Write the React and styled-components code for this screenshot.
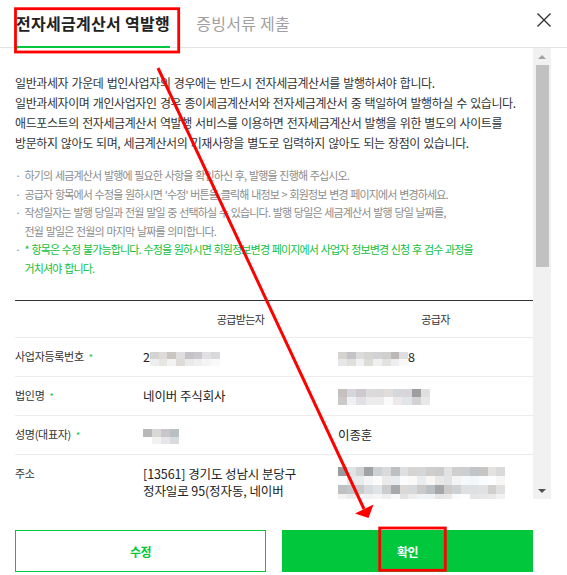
import styled, { createGlobalStyle } from "styled-components";

const GlobalStyle = createGlobalStyle`
    * { box-sizing: border-box; }
    body {
        margin: 0;
        background: #fff;
        font-family: "Noto Sans CJK KR", "Noto Sans", sans-serif;
    }
`

const GREEN = "#00c73c";

// pixelated blocks that hide private data in the screenshot
const seeded = (seed) => {
    let s = seed;
    return () => {
        s = (s * 9301 + 49297) % 233280;
        return s / 233280;
    };
};

const makeMosaic = (cols, rows, seed) => {
    const rnd = seeded(seed);
    const out = [];
    for (let r = 0; r < rows; r++) {
        const row = [];
        for (let c = 0; c < cols; c++) {
            const dark = r % 2 === 0;
            let v = dark ? 190 + Math.floor(rnd() * 40) : 226 + Math.floor(rnd() * 28);
            if (dark && rnd() > 0.9) v = 155 + Math.floor(rnd() * 20);
            const tint = Math.floor(rnd() * 6) - 3;
            row.push(`rgb(${v + tint},${v},${v - tint})`);
        }
        out.push(row);
    }
    return out;
};

const regNoBuyer = [
    ["#d6d4d1", "#dedcda", "#c9c6c2", "#e1dee1", "#c5c3c7", "#c9c8cc", "#e3e0e3", "#d9d9dd"],
    ["#eeeeee", "#e5e5e2", "#f3f3f3", "#dfdbd8", "#eaeaea", "#efefef", "#f4f4f4", "#f9f9f9"],
];
const regNoSupplier = [
    ["#d4d3cf", "#c4c3c7", "#dcdbdd", "#d5d5d2", "#d2d1d6", "#cfcfcd", "#bcb8b7", "#dedde1"],
    ["#e6e6e6", "#dfdfdb", "#f1f1f1", "#dcdcd8", "#f0f0f0", "#e2e2e0", "#efedf0", "#f8f8f8"],
];
const companySupplier = [
    ["#c4c1be", "#d6d4dc", "#cdc9cc", "#dcdadb", "#dad8da", "#e2dddd", "#d5d8db", "#d8d4da", "#9e9e9e", "#e0e0e0"],
    ["#cbc9c7", "#eef0f3", "#e2e0e2", "#ebebeb", "#ebebeb", "#fafafa", "#ede9ea", "#e2e5e7", "#d4d2d4", "#e8e8e6"],
];
const ceoBuyer = [
    ["#b8b8b8", "#d8d8d4", "#c8c6ca", "#b9c0c3"],
    ["#ffffff", "#f1f1f1", "#e6e6e8", "#d8dcdc"],
];
const addressSupplier = makeMosaic(19, 4, 17);

const Mosaic = ({ cells, w = 8.75, h = 7 }) => (
    <Blocks $cols={cells[0].length} $w={w} $h={h}>
        {cells.flat().map((c, i) => <Block key={i} $c={c} />)}
    </Blocks>
);

const notes = [
    { text: <>하기의 세금계산서 발행에 필요한 사항을 확인하신 후, 발행을 진행해 주십시오.</> },
    { text: <>공급자 항목에서 수정을 원하시면 '수정' 버튼을 클릭해 내정보 &gt; 회원정보 변경 페이지에서 변경하세요.</> },
    { text: <>작성일자는 발행 당일과 전월 말일 중 선택하실 수 있습니다. 발행 당일은 세금계산서 발행 당일 날짜를,<br />전월 말일은 전월의 마지막 날짜를 의미합니다.</> },
    { text: <>* 항목은 수정 불가능합니다. 수정을 원하시면 회원정보변경 페이지에서 사업자 정보변경 신청 후 검수 과정을<br />거치셔야 합니다.</>, accent: true },
];

const App = () => {

    return (
        <>
            <GlobalStyle />
            <Modal>
                <Header>
                    <Tab $active>전자세금계산서 역발행</Tab>
                    <Tab>증빙서류 제출</Tab>
                    <CloseButton aria-label="닫기">
                        <svg width="14" height="14" viewBox="0 0 14 14">
                            <path d="M0.5 0.5 L13.5 13.5 M13.5 0.5 L0.5 13.5" stroke="#333" strokeWidth="1.4" fill="none" />
                        </svg>
                    </CloseButton>
                </Header>

                <Body>
                    <Content>
                        <Intro>
                            일반과세자 가운데 법인사업자의 경우에는 반드시 전자세금계산서를 발행하셔야 합니다.<br />
                            일반과세자이며 개인사업자인 경우 종이세금계산서와 전자세금계산서 중 택일하여 발행하실 수 있습니다.<br />
                            애드포스트의 전자세금계산서 역발행 서비스를 이용하면 전자세금계산서 발행을 위한 별도의 사이트를<br />
                            방문하지 않아도 되며, 세금계산서의 기재사항을 별도로 입력하지 않아도 되는 장점이 있습니다.
                        </Intro>

                        <Notes>
                            {notes.map((n, i) => (
                                <Note key={i} $accent={n.accent}>{n.text}</Note>
                            ))}
                        </Notes>

                        <InfoTable>
                            <colgroup>
                                <col style={{ width: 128 }} />
                                <col style={{ width: 195 }} />
                                <col />
                            </colgroup>
                            <thead>
                                <tr>
                                    <HeadCell />
                                    <HeadCell>공급받는자</HeadCell>
                                    <HeadCell>공급자</HeadCell>
                                </tr>
                            </thead>
                            <tbody>
                                <tr>
                                    <Label>사업자등록번호<Required>*</Required></Label>
                                    <Value>2<Mosaic cells={regNoBuyer} /></Value>
                                    <Value><Mosaic cells={regNoSupplier} />8</Value>
                                </tr>
                                <tr>
                                    <Label>법인명<Required>*</Required></Label>
                                    <Value>네이버 주식회사</Value>
                                    <Value><Mosaic cells={companySupplier} w={9.2} h={8} /></Value>
                                </tr>
                                <tr>
                                    <Label>성명(대표자)<Required>*</Required></Label>
                                    <Value><Mosaic cells={ceoBuyer} w={9} h={7.5} /></Value>
                                    <Value>이종훈</Value>
                                </tr>
                                <tr>
                                    <Label>주소</Label>
                                    <Value>
                                        [13561] 경기도 성남시 분당구<br />
                                        정자일로 95(정자동, 네이버
                                    </Value>
                                    <Value><BlockMosaic><Mosaic cells={addressSupplier} w={8.8} h={9} /></BlockMosaic></Value>
                                </tr>
                            </tbody>
                        </InfoTable>
                    </Content>

                    <ScrollTrack>
                        <ScrollArrow $dir="up" />
                        <Thumb />
                        <TrackRest />
                        <ScrollArrow $dir="down" />
                    </ScrollTrack>
                </Body>

                <Footer>
                    <Button>수정</Button>
                    <Button $primary>확인</Button>
                </Footer>

                <Annotations width="567" height="575" viewBox="0 0 567 575">
                    <rect x="15.5" y="8.7" width="163.2" height="43.3" fill="none" stroke="#f00" strokeWidth="2.8" />
                    <rect x="379.7" y="528" width="65.6" height="42.3" fill="none" stroke="#f00" strokeWidth="2.8" />
                    <line x1="158" y1="68" x2="364" y2="509" stroke="#f00" strokeWidth="3" />
                    <polygon points="355,513.5 373.5,504.5 368.5,518" fill="#f00" />
                </Annotations>
            </Modal>
        </>
    )
};

const Modal = styled.div`
    position: relative;
    width: 567px;
    height: 575px;
    background: #fff;
    display: flex;
    flex-direction: column;
    overflow: hidden;
`
const Header = styled.div`
    height: 48px;
    flex: none;
    display: flex;
    padding: 0 16px;
    border-bottom: 1px solid #e4e4e4;
`
const Tab = styled.div`
    height: 48px;
    margin-bottom: -1px;
    margin-right: 26px;
    padding-top: 13px;
    font-size: 16px;
    line-height: 20px;
    letter-spacing: 0.3px;
    white-space: nowrap;
    font-weight: ${p => p.$active ? 700 : 400};
    color: ${p => p.$active ? "#222" : "#a0a0a0"};
    border-bottom: 2px solid ${p => p.$active ? GREEN : "transparent"};
`
const CloseButton = styled.button`
    margin-left: auto;
    margin-top: 13px;
    align-self: flex-start;
    width: 14px;
    height: 14px;
    padding: 0;
    border: 0;
    background: none;
    display: flex;
`
const Body = styled.div`
    height: 451px;
    flex: none;
    display: flex;
    padding-right: 16px;
`
const Content = styled.div`
    flex: 1;
    overflow: hidden;
    padding: 25px 0 0 15px;
`
const Intro = styled.p`
    margin: 0;
    font-size: 12px;
    line-height: 20px;
    letter-spacing: -0.4px;
    word-spacing: 1px;
    color: #333;
    white-space: nowrap;
`
const Notes = styled.ul`
    list-style: none;
    margin: 13px 0 0;
    padding: 0;
`
const Note = styled.li`
    position: relative;
    padding-left: 9.5px;
    font-size: 11px;
    line-height: 18.5px;
    letter-spacing: -0.85px;
    word-spacing: 1px;
    white-space: nowrap;
    color: ${p => p.$accent ? "#10c040" : "#8c8c8c"};

    &::before {
        content: "·";
        position: absolute;
        left: 0;
        top: 0;
        color: #8c8c8c;
    }
`
const InfoTable = styled.table`
    width: 518px;
    margin-top: 23px;
    border-collapse: collapse;
    table-layout: fixed;
    border-top: 1px solid #333;
`
const HeadCell = styled.th`
    height: 37px;
    padding: 0;
    font-size: 11px;
    line-height: 17px;
    letter-spacing: -0.6px;
    font-weight: 400;
    color: #333;
    text-align: center;
    border-bottom: 1px solid #ececec;
`
const Label = styled.td`
    height: 38px;
    padding: 10px 0;
    font-size: 11px;
    line-height: 17px;
    letter-spacing: -0.3px;
    color: #333;
    vertical-align: top;
    white-space: nowrap;
    border-bottom: 1px solid #ececec;
`
const Required = styled.span`
    margin-left: 5px;
    font-size: 9px;
    line-height: 1;
    color: ${GREEN};
    letter-spacing: 0;
`
const Value = styled.td`
    height: 38px;
    padding: 10px 0;
    font-size: 12.5px;
    line-height: 17px;
    letter-spacing: -0.1px;
    color: #222;
    vertical-align: top;
    white-space: nowrap;
    border-bottom: 1px solid #ececec;
`
const Blocks = styled.span`
    display: inline-grid;
    vertical-align: middle;
    grid-template-columns: repeat(${p => p.$cols}, ${p => p.$w}px);
    grid-auto-rows: ${p => p.$h}px;
`
const Block = styled.i`
    background: ${p => p.$c};
`
const BlockMosaic = styled.div`
    margin-top: 2px;
    line-height: 0;
`
const ScrollTrack = styled.div`
    width: 18px;
    flex: none;
    background: #f1f1f1;
    display: flex;
    flex-direction: column;
`
const ScrollArrow = styled.div`
    height: 17px;
    flex: none;
    display: flex;
    align-items: center;
    justify-content: center;

    &::after {
        content: "";
        width: 0;
        height: 0;
        border-left: 4px solid transparent;
        border-right: 4px solid transparent;
        ${p => p.$dir === "up"
            ? "border-bottom: 4px solid #a3a3a3;"
            : "border-top: 4px solid #505050;"}
    }
`
const Thumb = styled.div`
    height: 202px;
    flex: none;
    margin: 0 2px 0 3px;
    background: #c1c1c1;
`
const TrackRest = styled.div`
    flex: 1;
`
const Footer = styled.div`
    flex: 1;
    display: grid;
    grid-template-columns: 1fr 1fr;
    column-gap: 16px;
    align-content: start;
    padding: 31px 34px 0 15px;
`
const Button = styled.button`
    height: 42px;
    border: 1px solid ${GREEN};
    background: ${p => p.$primary ? GREEN : "#fff"};
    color: ${p => p.$primary ? "#fff" : GREEN};
    font-family: inherit;
    font-size: 12px;
    font-weight: 700;
    letter-spacing: -0.5px;
    padding: 0;
`
const Annotations = styled.svg`
    position: absolute;
    top: 0;
    left: 0;
    pointer-events: none;
`

export default App;
